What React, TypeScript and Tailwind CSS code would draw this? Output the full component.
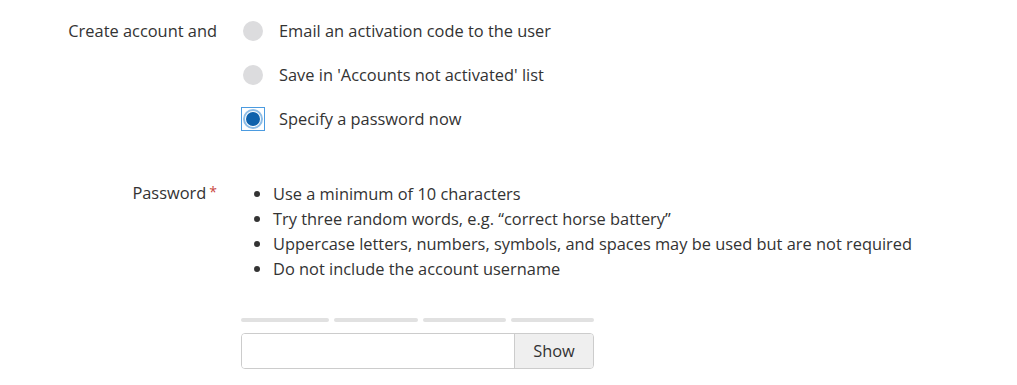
const font = { fontFamily: '"Segoe UI", "Open Sans", sans-serif' };

function Radio({ checked, label }: { checked?: boolean; label: string }) {
  return (
    <label className="flex h-[44px] items-center">
      <span className="flex h-[24px] w-[24px] items-center justify-center">
        {checked ? (
          <span className="flex h-[24px] w-[24px] items-center justify-center border border-[#4b9be0]">
            <span className="flex h-[20px] w-[20px] items-center justify-center rounded-full border-2 border-[#8ebde6] bg-white">
              <span className="h-[14px] w-[14px] rounded-full bg-[#0f62ac]" />
            </span>
          </span>
        ) : (
          <span className="h-[20px] w-[20px] rounded-full bg-[#dcdcde]" />
        )}
      </span>
      <span className="ml-[14px]">{label}</span>
    </label>
  );
}

const rules = [
  "Use a minimum of 10 characters",
  "Try three random words, e.g. \u201ccorrect horse battery\u201d",
  "Uppercase letters, numbers, symbols, and spaces may be used but are not required",
  "Do not include the account username",
];

export default function App() {
  return (
    <div
      className="min-h-[385px] w-[1017px] bg-white pt-[9px] text-[16.4px] text-[#333]"
      style={font}
    >
      <div className="grid grid-cols-[217px_1fr] gap-x-[24px]">
        <div className="flex h-[44px] items-center justify-end">Create account and</div>
        <div className="flex flex-col">
          <Radio label="Email an activation code to the user" />
          <Radio label="Save in 'Accounts not activated' list" />
          <Radio checked label="Specify a password now" />
        </div>

        <div className="mt-[40px] flex h-[25px] items-center justify-end">
          Password
          <span className="ml-[3px] mt-[-4px] text-[14px] leading-none text-[#c9463d]">*</span>
        </div>
        <div className="mt-[40px]">
          <ul className="ml-[32px] list-disc leading-[25px] marker:text-[#333]">
            {rules.map((r) => (
              <li key={r}>{r}</li>
            ))}
          </ul>
          <div className="mt-[37px] flex w-[353px] gap-[5px]">
            <div className="h-[4px] w-[88px] rounded-full bg-[#e1e1e1]" />
            <div className="h-[4px] w-[84px] rounded-full bg-[#e1e1e1]" />
            <div className="h-[4px] w-[83px] rounded-full bg-[#e1e1e1]" />
            <div className="h-[4px] w-[83px] rounded-full bg-[#e1e1e1]" />
          </div>
          <div className="mt-[11px] flex h-[36px] w-[353px] overflow-hidden rounded-[4px] border border-[#cccccc]">
            <input
              type="password"
              className="min-w-0 flex-1 bg-white px-2 outline-none"
            />
            <button className="w-[79px] border-l border-[#cccccc] bg-[#efefef] text-[#333]">
              Show
            </button>
          </div>
        </div>
      </div>
    </div>
  );
}
